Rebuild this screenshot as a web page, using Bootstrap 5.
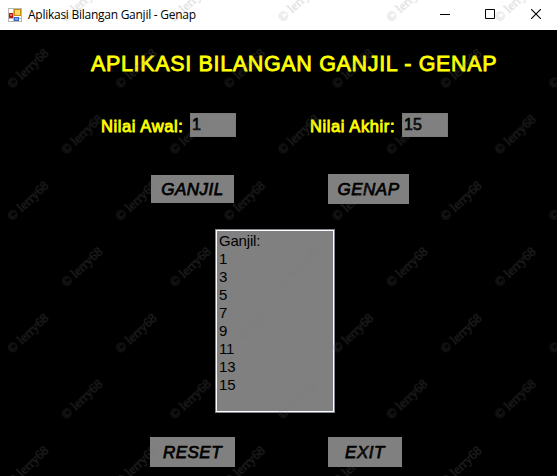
<!DOCTYPE html>
<html lang="id">
<head>
<meta charset="utf-8">
<meta name="viewport" content="width=device-width, initial-scale=1">
<title>Aplikasi Bilangan Ganjil - Genap</title>
<link href="https://cdn.jsdelivr.net/npm/bootstrap@5.3.0/dist/css/bootstrap.min.css" rel="stylesheet">
<style>
body { width: 557px; height: 476px; background: #000; font-family: "Liberation Sans", Arial, sans-serif; color: #000; }
.titlebar { height: 30px; padding-left: 8px; }
.caption-text { font: 12px/30px "Open Sans", "Noto Sans", sans-serif; letter-spacing: -.26px; margin-left: 6px; }
.caption-buttons { gap: 35px; padding: 0 16px 2px 0; }
.caption-buttons svg:last-child { margin-left: 1px; }
.app-heading { font-size: 21.5px; line-height: 26px; margin: 21px 0 0 91px; font-weight: 400; color: #ff0; letter-spacing: .66px; -webkit-text-stroke: .8px #ff0; white-space: nowrap; }
.fields { margin: 36px 0 0 101px; height: 24px; }
.fields label { font-size: 16.500px; line-height: 24px; padding-top: 1px; color: #ff0; letter-spacing: .6px; -webkit-text-stroke: .8px #ff0; white-space: nowrap; }
.first-label { width: 89px; }
.second-label { width: 92px; margin-left: 74px; }
.number-box { width: 46px; height: 24px; background: #808080; border: 1px solid #7a7a7a; border-radius: 0; padding: 0 0 1px 1px; font-size: 16px; line-height: 22px; color: #000; -webkit-text-stroke: .7px #000; outline: 0; }
.flat-btn { background: #808080; border: 0; border-radius: 0; padding: 0; height: 30px; font-size: 17px; line-height: 30px; font-style: italic; letter-spacing: .5px; color: #000; -webkit-text-stroke: .75px #000; }
.odd-row { margin: 37px 0 0 151px; height: 30px; }
.end-row { margin: 24px 0 0 150px; height: 30px; }
.odd-btn { width: 83px; height: 28px; line-height: 30px; }
.even-btn { width: 81px; margin-left: 94px; padding-top: 1px; }
.reset-btn { width: 85px; padding-top: 1px; }
.exit-btn { width: 74px; margin-left: 93px; padding-top: 1px; }
.result-box { width: 120px; height: 184px; margin: 25px 0 0 215px; background: #808080; border: 1px solid #828790; box-shadow: inset 0 0 0 1px #fff; padding: 2px 3px; font-size: 15px; line-height: 18px; letter-spacing: -.2px; }
.watermark { pointer-events: none; }
</style>
<script src="https://cdn.jsdelivr.net/npm/bootstrap@5.3.0/dist/js/bootstrap.bundle.min.js"></script>
</head>
<body class="position-relative overflow-hidden m-0">
<header class="titlebar bg-white d-flex align-items-center">
  <svg width="14" height="14" viewBox="0 0 14 14" shape-rendering="crispEdges">
    <path fill="#fff" stroke="#b8b8b8" d="M.5.5h13v13H.5zM.5 10.500h13M5.500.5v13"/>
    <path fill="#b51c0c" d="M1 5h4v5H1z"/><path fill="#e87568" d="M2 6h2v2H2z"/>
    <path fill="#c78f12" d="M6 1h7v7H6z"/><path fill="#ffd75a" d="M7 2h5v5H7z"/>
    <path fill="#3868c8" d="M6 9h5v4H6z"/><path fill="#78a5ef" d="M7 10h3v2H7z"/>
  </svg>
  <span class="caption-text flex-grow-1 text-nowrap">Aplikasi Bilangan Ganjil - Genap</span>
  <div class="caption-buttons d-flex align-items-center">
    <svg width="10" height="10"><path stroke="#000" d="M0 5.500h10"/></svg>
    <svg width="10" height="10"><path fill="none" stroke="#000" d="M.5.5h9v9h-9z"/></svg>
    <svg width="10" height="10"><path stroke="#000" stroke-width="1.100" d="M0 0l10 10M10 0L0 10"/></svg>
  </div>
</header>
<main class="d-flex flex-column">
  <h1 class="app-heading">APLIKASI BILANGAN GANJIL - GENAP</h1>
  <div class="fields d-flex">
    <label class="first-label" for="awal">Nilai Awal:</label>
    <input class="number-box" id="awal" type="text" value="1">
    <label class="second-label" for="akhir">Nilai Akhir:</label>
    <input class="number-box" id="akhir" type="text" value="15">
  </div>
  <div class="odd-row d-flex align-items-center">
    <button class="btn flat-btn odd-btn">GANJIL</button>
    <button class="btn flat-btn even-btn">GENAP</button>
  </div>
  <div class="result-box">
    <div>Ganjil:</div><div>1</div><div>3</div><div>5</div><div>7</div><div>9</div><div>11</div><div>13</div><div>15</div>
  </div>
  <div class="end-row d-flex">
    <button class="btn flat-btn reset-btn">RESET</button>
    <button class="btn flat-btn exit-btn">EXIT</button>
  </div>
</main>
<svg class="watermark position-absolute top-0 start-0" width="557" height="476" aria-hidden="true">
  <defs>
    <pattern id="marks" patternUnits="userSpaceOnUse" x="4" y="30" width="108.300" height="132.400">
      <g font-family="Liberation Serif, serif" font-size="13" fill="#747474" fill-opacity=".17" stroke="#747474" stroke-opacity=".12" stroke-width=".7">
        <text transform="translate(8 59) rotate(-43)" textLength="51">© lerry68</text>
        <text transform="translate(62 125) rotate(-43)" textLength="51">© lerry68</text>
      </g>
    </pattern>
  </defs>
  <rect width="557" height="476" fill="url(#marks)"/>
</svg>
</body>
</html>
